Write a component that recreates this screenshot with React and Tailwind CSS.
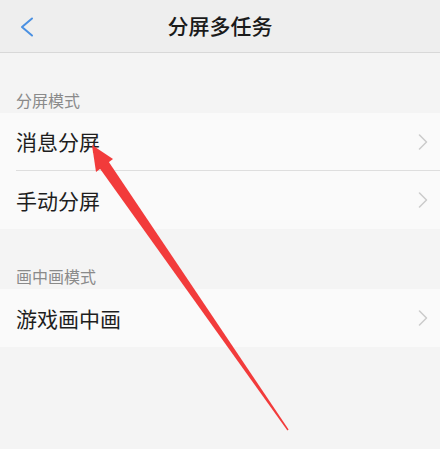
import React from "react";

const font = { fontFamily: '"Noto Sans CJK SC", "Noto Sans", sans-serif' };

function Chevron() {
  return (
    <svg width="12" height="16" viewBox="0 0 12 16" className="shrink-0">
      <path d="M2.5 1 L9.5 8 L2.5 15" fill="none" stroke="#cbcbcb" strokeWidth="1.5" strokeLinecap="round" strokeLinejoin="round" />
    </svg>
  );
}

function Row({ label, divider }) {
  return (
    <div className="bg-[#fafafa] pl-4">
      <div className={`flex h-[58px] items-center justify-between pr-[11px] ${divider ? "border-b border-[#dedede]" : ""}`}>
        <span className="text-[21px] leading-none text-[#1e1e1e]">{label}</span>
        <Chevron />
      </div>
    </div>
  );
}

function Section({ title }) {
  return (
    <div className="pl-4 pt-[36px] pb-[2px]">
      <div className="text-[16px] leading-[22px] text-[#8a8a8a]">{title}</div>
    </div>
  );
}

export default function App() {
  return (
    <div className="relative h-[449px] w-[440px] overflow-hidden bg-[#f4f4f4]" style={font}>
      <div className="relative flex h-[53px] items-center justify-center border-b border-[#d8d8d8] bg-[#eeeeee]">
        <svg width="16" height="20" viewBox="0 0 16 20" className="absolute left-[19px] top-[17px]">
          <path d="M13 1.5 L3 10 L13 18.5" fill="none" stroke="#4a90e2" strokeWidth="2" strokeLinecap="round" strokeLinejoin="round" />
        </svg>
        <span className="text-[21px] font-medium text-[#1a1a1a]">分屏多任务</span>
      </div>
      <Section title="分屏模式" />
      <Row label="消息分屏" divider />
      <Row label="手动分屏" />
      <Section title="画中画模式" />
      <Row label="游戏画中画" />
      <svg className="pointer-events-none absolute left-0 top-0" width="440" height="449" viewBox="0 0 440 449">
        <polygon points="108.5,161.5 99.5,168 287.4,430.4 288.6,429.6" fill="#f23b3b" />
        <polygon points="92,145 113,159 96,172" fill="#f23b3b" />
      </svg>
    </div>
  );
}
